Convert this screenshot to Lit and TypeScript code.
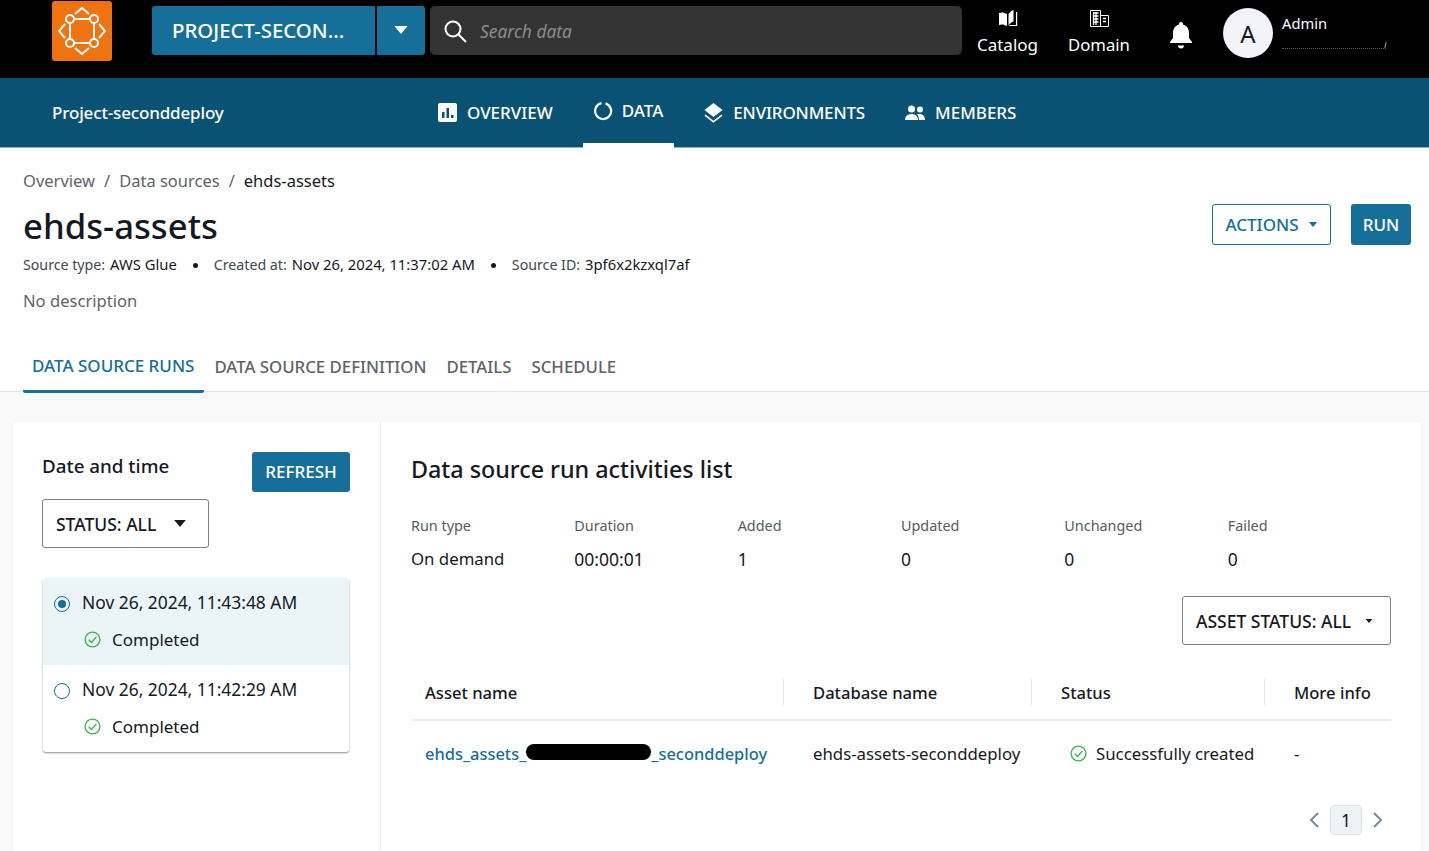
import { LitElement, html, css } from "lit";
import { customElement } from "lit/decorators.js";

const check = (size: number) => html`<svg class="check" width=${size} height=${size} viewBox="0 0 18 18" fill="none" stroke="#3fb350" stroke-width="1.4"><circle cx="9" cy="9" r="7.8"/><path d="M5 9.2l2.9 3 5.2-6" stroke-width="1.5"/></svg>`;
const caret = (w: number, h: number, c: string) => html`<svg width=${w} height=${h} viewBox="0 0 10 6"><path d="M0 0h10L5 6z" fill=${c}/></svg>`;

@customElement("app-root")
export class AppRoot extends LitElement {
  static styles = css`
    :host { display: block; width: 1429px; height: 851px; overflow: hidden; background: #f9f9f9; font-family: "Noto Sans", "Open Sans", sans-serif; color: #16191f; font-size: 18px; }
    * { box-sizing: border-box; }
    .top { height: 78px; background: #000; display: flex; align-items: flex-start; padding-left: 52px; color: #fff; }
    .logo { width: 60px; height: 60px; margin-top: 1px; border-radius: 3px; background: #ef7411; display: flex; align-items: center; justify-content: center; }
    .project { margin: 6px 0 0 40px; width: 273px; height: 49px; display: flex; background: #166f99; border-radius: 3px; }
    .project .name { width: 225px; padding-left: 20px; font-size: 20.4px; font-weight: 500; line-height: 49px; border-right: 2px solid #000; white-space: nowrap; }
    .project .arrow { flex: 1; display: flex; align-items: center; justify-content: center; padding-bottom: 2px; }
    .search { margin: 6px 0 0 5px; width: 532px; height: 49px; border-radius: 5px; background: #333; display: flex; align-items: center; padding-left: 13px; gap: 13px; }
    .search span { font-style: italic; color: #8c8c8c; font-size: 17.4px; }
    .tool { display: flex; flex-direction: column; align-items: center; line-height: 24px; padding-top: 10px; gap: 6px; }
    .tool svg { display: block; }
    .tool.catalog { margin-left: 15px; width: 61px; font-size: 17px; }
    .tool.domain { margin-left: 30px; width: 62px; font-size: 16.7px; }
    .bell { margin: 21px 0 0 39px; }
    .avatar { margin: 8px 0 0 30px; width: 50px; height: 50px; border-radius: 50%; background: #f2f4f8; color: #16191f; font-size: 24px; display: flex; align-items: center; justify-content: center; }
    .user { margin: 13px 0 0 9px; font-size: 14.7px; line-height: 20px; }
    .user i { display: block; width: 104px; margin-top: 8px; height: 8px; border-bottom: 1px dotted #5a5a5a; position: relative; }
    .user i::after { content: ""; position: absolute; right: 0; top: 1px; width: 1px; height: 6px; background: #aaa; transform: rotate(14deg); }
    .nav { height: 70px; background: #0a5273; color: #fff; display: flex; padding-left: 52px; border-bottom: 1px solid #8fb6c8; }
    .nav .title { width: 356px; font-size: 17px; letter-spacing: -.15px; font-weight: 500; line-height: 70px; }
    .nav .item { display: flex; align-items: center; gap: 10px; padding: 0 30px; height: 69px; font-size: 17px; font-weight: 500; white-space: nowrap; position: relative; }
    .nav .item.active { padding: 0 11px 4px 10px; gap: 9px; }
    .nav .item.active::after { content: ""; position: absolute; left: 0; right: 0; bottom: -1px; height: 5px; background: #fff; }
    .nav .item.env { letter-spacing: -.15px; }
    .nav .item.members { padding-left: 10px; }
    .head { background: #fff; height: 244px; padding: 22px 18px 0 23px; border-bottom: 1px solid #e3e3e3; }
    .crumbs { display: flex; gap: 9px; font-size: 16.5px; line-height: 22px; color: #5f6368; }
    .crumbs b { font-weight: 400; color: #16191f; }
    .titlerow { display: flex; justify-content: space-between; align-items: flex-start; margin-top: 11px; }
    h1 { margin: 0; font-size: 34.7px; font-weight: 500; line-height: 46px; }
    .actions { display: flex; gap: 20px; margin-top: 1px; }
    .btn { height: 41px; border-radius: 3px; font-size: 17px; font-weight: 500; display: flex; align-items: center; justify-content: center; }
    .btn.outline { width: 119px; border: 1px solid #166f99; color: #166f99; gap: 9px; }
    .btn.solid { background: #166f99; color: #fff; width: 60px; }
    .meta { display: flex; align-items: baseline; font-size: 14.2px; line-height: 20px; margin-top: 5px; color: #414750; }
    .meta b { font-weight: 400; font-size: 14.8px; color: #16191f; margin-left: 5px; }
    .meta .dot { width: 5px; height: 5px; border-radius: 50%; background: #16191f; margin: 0 16px; position: relative; top: -2px; }
    .desc { margin-top: 14px; font-size: 16.6px; line-height: 24px; color: #5f6368; }
    .tabs { display: flex; margin-top: 34px; font-size: 16.8px; }
    .tab { padding: 0 10px; height: 47px; line-height: 40px; color: #5f6368; font-weight: 500; white-space: nowrap; }
    .tab.on { color: #166f99; font-size: 17px; padding: 0 10px 0 9px; line-height: 38px; border-bottom: 3px solid #166f99; height: 46px; border-radius: 0 0 2px 2px; }
    .body { margin: 30px 8px 0 13px; height: 460px; background: #fff; border-radius: 4px; display: flex; box-shadow: 0 0 3px rgba(0,0,0,.05); }
    .left { width: 368px; padding: 30px 30px 0 29px; border-right: 1px solid #e9ebed; flex: none; }
    .lefthead { display: flex; justify-content: space-between; align-items: flex-start; }
    .lefthead h3 { margin: 0; font-size: 18.8px; font-weight: 500; line-height: 28px; }
    .refresh { width: 98px; height: 40px; padding-bottom: 1px; font-size: 17px; border-radius: 3px; background: #166f99; color: #fff; display: flex; align-items: center; justify-content: center; font-weight: 500; }
    .select { display: flex; align-items: center; border: 1px solid #7c7f83; border-radius: 3px; background: #fff; font-size: 17.5px; font-weight: 500; white-space: nowrap; }
    .status { width: 167px; height: 49px; padding-left: 13px; gap: 18px; margin-top: 7px; }
    .runs { margin: 30px 0 0 1px; width: 306px; border-radius: 3px; box-shadow: 0 1px 2px rgba(0,0,0,.45); }
    .run { height: 87px; padding: 12px 11px 0; display: flex; flex-direction: column; gap: 12px; line-height: 25px; }
    .run.sel { background: #ebf4f7; border-radius: 3px 3px 0 0; }
    .run .l1, .run .l2 { display: flex; align-items: center; }
    .run .l1 { gap: 12px; font-size: 17.4px; white-space: nowrap; }
    .run .l2 { padding-left: 30px; gap: 11px; font-size: 17px; }
    .radio { width: 16px; height: 16px; border-radius: 50%; border: 1.5px solid #166f99; display: flex; align-items: center; justify-content: center; margin-top: 2px; }
    .radio.on::after { content: ""; width: 8px; height: 8px; border-radius: 50%; background: #166f99; }
    .right { flex: 1; min-width: 0; padding: 30px 30px 0 30px; }
    h2 { margin: 0; font-size: 23.3px; font-weight: 500; line-height: 34px; }
    .stats { display: grid; grid-template-columns: repeat(6, 1fr); margin-top: 30px; }
    .stats small { display: block; font-size: 14.4px; line-height: 20px; color: #545b64; }
    .stats span { display: block; margin-top: 10px; font-size: 17.5px; line-height: 26px; }
    .stats span.od { font-size: 16.8px; }
    .assetrow { display: flex; justify-content: flex-end; margin-top: 24px; }
    .asset { width: 209px; height: 49px; padding-left: 13px; gap: 14px; }
    .table { margin-top: 22px; }
    .tr { display: grid; grid-template-columns: 372px 248px 233px 1fr; }
    .th { height: 54px; border-bottom: 2px solid #eaedf1; font-weight: 500; font-size: 16.6px; }
    .th > div { padding-left: 14px; line-height: 51px; position: relative; white-space: nowrap; }
    .th > div + div { padding-left: 30px; }
    .th > div:nth-child(2) { padding-left: 30px; }
    .th > div + div::before { content: ""; position: absolute; left: 0; top: 12px; height: 26px; width: 1px; background: #e3e6ea; }
    .td { height: 65px; align-items: center; font-size: 16.8px; }
    .td > div { padding-left: 30px; white-space: nowrap; }
    .td > div:first-child { padding-left: 14px; }
    .td a { color: #166f99; text-decoration: none; font-weight: 500; font-size: 16.45px; white-space: nowrap; }
    .td a u { display: inline-block; text-decoration: none; width: 125px; height: 16px; background: #000; border-radius: 8px; vertical-align: 0; margin: 0; }
    .td div.ok { display: flex; align-items: center; gap: 9px; padding-left: 39px; }
    .pager { display: flex; justify-content: flex-end; align-items: center; gap: 10px; margin-top: 19px; padding-right: 7px; }
    .pager .num { width: 32px; height: 30px; background: #eef4f6; border: 1px solid #d9e2e6; border-radius: 4px; display: flex; align-items: center; justify-content: center; font-size: 17.5px; }
  `;

  render() {
    return html`
      <div class="top">
        <div class="logo">
          <svg width="48" height="48" viewBox="0 0 48 48" fill="none" stroke="#fff" stroke-width="2">
            <path d="M12 12h24v24H12z"/>
            <circle cx="12" cy="12" r="4" fill="#ef7411"/><circle cx="36" cy="12" r="4" fill="#ef7411"/><circle cx="12" cy="36" r="4" fill="#ef7411"/><circle cx="36" cy="36" r="4" fill="#ef7411"/>
            <path d="M17 7l7-6 7 6M17 41l7 6 7-6M7 17l-6 7 6 7M41 17l6 7-6 7"/>
          </svg>
        </div>
        <div class="project">
          <div class="name">PROJECT-SECON...</div>
          <div class="arrow">${caret(14, 8, "#fff")}</div>
        </div>
        <div class="search">
          <svg width="24" height="24" viewBox="0 0 24 24" fill="none" stroke="#fff" stroke-width="2"><circle cx="10" cy="10" r="7.5"/><path d="M15.5 15.500L23 23"/></svg>
          <span>Search data</span>
        </div>
        <div class="tool catalog">
          <svg width="20" height="17" viewBox="0 0 20 17" fill="#fff"><path d="M1 3c3-1 5-.5 8 1v12c-3-1.500-5-2-8-1z"/><path d="M10.500 4c1-1.500 2.500-3 5-4v11.500c-2 .5-3.500 2-5 4z"/><path d="M18 2h1.200v14h-8v-1h6.800z"/></svg>
          <span>Catalog</span>
        </div>
        <div class="tool domain">
          <svg width="19" height="17" viewBox="0 0 19 17" fill="none" stroke="#fff" stroke-width="1"><path d="M.5.500h10v16h-10zM10.500 5.500h8v11h-8z"/><path d="M3 3h5.500M3 6h5.500M3 9h5.500M3 12h5.500M3.500 2v13M6 2v13M13 8.500h3M13 11.500h3" stroke-width="1.300"/></svg>
          <span>Domain</span>
        </div>
        <svg class="bell" width="24" height="28" viewBox="0 0 24 28" fill="#fff"><path d="M12 1c1.200 0 2 .8 2 2v.6c3.800 1 6 4.200 6 8.400v5l3 4v1H1v-1l3-4v-5c0-4.200 2.200-7.400 6-8.400V3c0-1.200.8-2 2-2z"/><path d="M9 24.500h6c0 1.700-1.300 3-3 3s-3-1.300-3-3z"/></svg>
        <div class="avatar">A</div>
        <div class="user">Admin<i></i></div>
      </div>

      <div class="nav">
        <div class="title">Project-seconddeploy</div>
        <div class="item">
          <svg width="19" height="19" viewBox="0 0 19 19"><rect width="19" height="19" rx="2" fill="#fff"/><path d="M4 9h2.500v6H4zM8.500 5H11v10H8.500zM13 12h2.500v3H13z" fill="#0a5273"/></svg>
          OVERVIEW
        </div>
        <div class="item active">
          <svg width="20" height="20" viewBox="0 0 20 20" fill="none" stroke="#fff" stroke-width="2.200"><path d="M8.500 2.200A8 8 0 1 0 12.500 2.400" /></svg>
          DATA
        </div>
        <div class="item env">
          <svg width="19" height="20" viewBox="0 0 19 20" fill="#fff"><path d="M9.500 0l9 7-9 7-9-7z"/><path d="M1.500 11.500l8 6.200 8-6.200 1 1.300-9 7-9-7z"/></svg>
          ENVIRONMENTS
        </div>
        <div class="item members">
          <svg width="20" height="16" viewBox="0 0 20 16" fill="#fff"><circle cx="6.500" cy="4" r="3.500"/><circle cx="15" cy="4.500" r="3"/><path d="M0 15c0-4 3-6 6.500-6s6.500 2 6.500 6zM14 15c0-2.500-.8-4.300-2-5.500 4-1.500 8 .5 8 5.500z"/></svg>
          MEMBERS
        </div>
      </div>

      <div class="head">
        <div class="crumbs"><span>Overview</span><span>/</span><span>Data sources</span><span>/</span><b>ehds-assets</b></div>
        <div class="titlerow">
          <h1>ehds-assets</h1>
          <div class="actions">
            <div class="btn outline">ACTIONS ${caret(10, 5, "#166f99")}</div>
            <div class="btn solid">RUN</div>
          </div>
        </div>
        <div class="meta">
          Source type:<b>AWS Glue</b><span class="dot"></span>Created at:<b>Nov 26, 2024, 11:37:02 AM</b><span class="dot"></span>Source ID:<b>3pf6x2kzxql7af</b>
        </div>
        <div class="desc">No description</div>
        <div class="tabs">
          <div class="tab on">DATA SOURCE RUNS</div>
          <div class="tab">DATA SOURCE DEFINITION</div>
          <div class="tab">DETAILS</div>
          <div class="tab">SCHEDULE</div>
        </div>
      </div>

      <div class="body">
        <div class="left">
          <div class="lefthead">
            <h3>Date and time</h3>
            <div class="refresh">REFRESH</div>
          </div>
          <div class="select status">STATUS: ALL ${caret(12, 7, "#16191f")}</div>
          <div class="runs">
            <div class="run sel">
              <div class="l1"><span class="radio on"></span>Nov 26, 2024, 11:43:48 AM</div>
              <div class="l2">${check(17)}Completed</div>
            </div>
            <div class="run">
              <div class="l1"><span class="radio"></span>Nov 26, 2024, 11:42:29 AM</div>
              <div class="l2">${check(17)}Completed</div>
            </div>
          </div>
        </div>
        <div class="right">
          <h2>Data source run activities list</h2>
          <div class="stats">
            <div><small>Run type</small><span class="od">On demand</span></div>
            <div><small>Duration</small><span>00:00:01</span></div>
            <div><small>Added</small><span>1</span></div>
            <div><small>Updated</small><span>0</span></div>
            <div><small>Unchanged</small><span>0</span></div>
            <div><small>Failed</small><span>0</span></div>
          </div>
          <div class="assetrow">
            <div class="select asset">ASSET STATUS: ALL ${caret(8, 4, "#16191f")}</div>
          </div>
          <div class="table">
            <div class="tr th"><div>Asset name</div><div>Database name</div><div>Status</div><div>More info</div></div>
            <div class="tr td">
              <div><a href="#">ehds_assets_<u></u>_seconddeploy</a></div>
              <div>ehds-assets-seconddeploy</div>
              <div class="ok">${check(17)}Successfully created</div>
              <div>-</div>
            </div>
          </div>
          <div class="pager">
            <svg width="12" height="16" viewBox="0 0 12 16" fill="none" stroke="#76899a" stroke-width="2"><path d="M10 1L3 8l7 7"/></svg>
            <div class="num">1</div>
            <svg width="12" height="16" viewBox="0 0 12 16" fill="none" stroke="#76899a" stroke-width="2"><path d="M2 1l7 7-7 7"/></svg>
          </div>
        </div>
      </div>
    `;
  }
}
